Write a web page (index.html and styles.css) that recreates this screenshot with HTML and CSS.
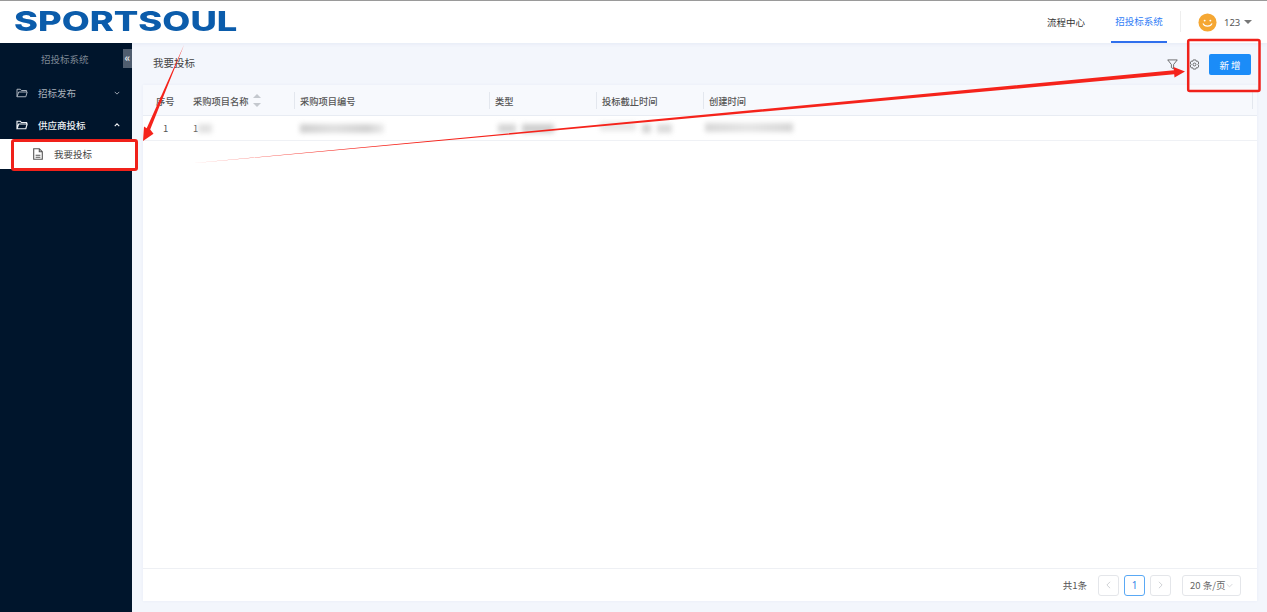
FILE: index.html
```
<!DOCTYPE html>
<html lang="zh">
<head>
<meta charset="utf-8">
<title>招投标系统</title>
<link rel="stylesheet" href="styles.css">
</head>
<body>
<div class="app">
  <header class="topbar">
    <div class="logo"><span class="logo-text">SPORTSOUL</span></div>
    <nav class="topnav">
      <a class="topnav-item">流程中心</a>
      <a class="topnav-item active">招投标系统</a>
    </nav>
    <div class="user">
      <svg class="avatar" viewBox="0 0 20 20"><circle cx="10" cy="10" r="9.5" fill="#f5a733"/><circle cx="7" cy="8" r="1" fill="#fff"/><circle cx="13" cy="8" r="1" fill="#fff"/><path d="M5.500 11.500c1 3 8 3 9 0" fill="none" stroke="#fff" stroke-width="1.3" stroke-linecap="round"/></svg>
      <span class="user-name">123</span>
      <span class="caret"></span>
    </div>
  </header>
  <div class="main">
    <aside class="sidebar">
      <div class="side-title">招投标系统</div>
      <div class="side-collapse">«</div>
      <div class="side-group">
        <svg class="folder" viewBox="0 0 14 12"><path d="M1 10.500V1.500h4l1.200 1.500H12.500v1.800M1 10.500h10.600l1.600-5.700H3L1 10.500z" fill="none" stroke="currentColor" stroke-width="1.200"/></svg>
        <span class="side-label">招标发布</span>
        <svg class="chev" viewBox="0 0 8 5"><path d="M1 1l3 3 3-3" fill="none" stroke="currentColor" stroke-width="1.200"/></svg>
      </div>
      <div class="side-group open">
        <svg class="folder" viewBox="0 0 14 12"><path d="M1 10.500V1.500h4l1.200 1.500H12.500v1.800M1 10.500h10.600l1.600-5.700H3L1 10.500z" fill="none" stroke="currentColor" stroke-width="1.400"/></svg>
        <span class="side-label">供应商投标</span>
        <svg class="chev" viewBox="0 0 8 5"><path d="M1 4l3-3 3 3" fill="none" stroke="currentColor" stroke-width="1.500"/></svg>
      </div>
      <div class="side-item">
        <svg class="doc" viewBox="0 0 10 12"><path d="M.7.7h5.600l3 3v7.600H.7zM6.300.7v3h3" fill="none" stroke="#555" stroke-width="1.100"/><path d="M2.600 7.200h4.800M2.600 9.200h4.800" stroke="#555" stroke-width="1.100"/></svg>
        <span>我要投标</span>
      </div>
    </aside>
    <main class="content">
      <div class="toolbar">
        <h1 class="page-title">我要投标</h1>
        <div class="tools">
          <svg class="tool-icon filter" viewBox="0 0 12 12"><path d="M.8 1h10.400L7.200 6v4.800L4.800 9.400V6z" fill="none" stroke="#555" stroke-width=".9"/></svg>
          <svg class="tool-icon gear" viewBox="0 0 12 12"><path d="M4.600 1h2.800l.5 1.500 1.500-.3 1.300 2.200-1 1.600 1 1.600-1.300 2.200-1.500-.3-.5 1.500H4.600l-.5-1.500-1.500.3L1.300 7.600l1-1.600-1-1.600 1.300-2.200 1.500.3z" fill="none" stroke="#555" stroke-width=".9"/><circle cx="6" cy="6" r="1.600" fill="none" stroke="#555" stroke-width=".9"/></svg>
          <button class="btn-primary">新 增</button>
        </div>
      </div>
      <section class="card">
        <div class="table">
          <div class="row head">
            <div class="cell c-idx">序号</div>
            <div class="cell c-name">采购项目名称
              <span class="sort"><i class="up"></i><i class="down"></i></span>
            </div>
            <div class="cell c-code">采购项目编号</div>
            <div class="cell c-type">类型</div>
            <div class="cell c-end">投标截止时间</div>
            <div class="cell c-created">创建时间</div>
          </div>
          <div class="row body">
            <div class="cell c-idx center">1</div>
            <div class="cell c-name">1<span class="blur b-name"></span></div>
            <div class="cell c-code"><span class="blur b-code"></span></div>
            <div class="cell c-type"><span class="blur b-type1"></span><span class="blur b-type2"></span></div>
            <div class="cell c-end"><span class="blur b-end1"></span><span class="blur b-end2"></span><span class="blur b-end3"></span></div>
            <div class="cell c-created"><span class="blur b-created"></span></div>
          </div>
        </div>
        <footer class="pager">
          <span class="total">共1条</span>
          <span class="page-btn disabled"><svg viewBox="0 0 6 10"><path d="M5 1L1 5l4 4" fill="none" stroke="currentColor"/></svg></span>
          <span class="page-btn current">1</span>
          <span class="page-btn disabled last"><svg viewBox="0 0 6 10"><path d="M1 1l4 4-4 4" fill="none" stroke="currentColor"/></svg></span>
          <span class="page-size">20 条/页<svg viewBox="0 0 10 6"><path d="M1 1l4 4 4-4" fill="none" stroke="currentColor"/></svg></span>
        </footer>
      </section>
    </main>
  </div>
  <svg class="annotations" viewBox="0 0 1267 612">
    <rect x="12.500" y="140.500" width="124" height="29" rx="1.500" fill="none" stroke="#f0211a" stroke-width="3"/>
    <rect x="1188.200" y="40" width="71.300" height="51" rx="1.500" fill="none" stroke="#f0211a" stroke-width="2.500"/>
    <path d="M184 45L150.200 129.500l3.300 4.200L143 141l1-14.500 2.700 1.800z" fill="#f5231b"/>
    <path d="M190 163.500L1174 70.200l-.5-3.200L1185 71.600l-10.500 5.800-.3-3.100z" fill="#f5231b"/>
  </svg>
</div>
</body>
</html>
```
FILE: styles.css
```
* { box-sizing: border-box; }
html, body { margin: 0; height: 100%; }
body {
  font-family: "Noto Sans CJK SC", "Noto Sans", sans-serif;
  font-size: 9.5px;
  color: #444;
  background: #f3f6fc;
  overflow: hidden;
}
.app { position: relative; width: 1267px; height: 612px; display: flex; flex-direction: column; }
.topbar {
  height: 43px;
  flex: none;
  display: flex;
  align-items: stretch;
  background: #fff;
  border-top: 1px solid #9a9a9a;
  box-shadow: 0 1px 4px rgba(60, 90, 160, .08);
  position: relative;
}
.logo { width: 1030px; padding: 10px 0 0 14px; flex: none; overflow: hidden; }
.logo-text {
  display: block;
  width: 222px;
  line-height: 22px;
  font-family: Inter, "Liberation Sans", sans-serif;
  font-weight: 800;
  font-size: 27px;
  color: #0b5cab;
  transform-origin: 0 50%;
  transform: scaleX(1.345);
  white-space: nowrap;
}
.topnav { display: flex; width: 150px; flex: none; }
.topnav-item { display: flex; align-items: center; justify-content: center; height: 42px; }
.topnav-item:first-child { width: 72px; color: #333; margin-right: 9px; }
.topnav-item.active { width: 56px; color: #2f7df6; border-bottom: 2px solid #2f6fed; }
.user {
  display: flex;
  align-items: center;
  padding-left: 18px;
  position: relative;
}
.user::before { content: ""; position: absolute; left: 0; top: 10px; height: 21px; width: 1px; background: #eee; }
.avatar { width: 19px; height: 19px; flex: none; }
.user-name { margin-left: 7px; color: #555; font-size: 9.5px; font-family: "Noto Sans", sans-serif; }
.caret { margin-left: 4px; border: 4px solid transparent; border-top: 4.5px solid #777; border-bottom: 0; }
.main { flex: 1; display: flex; min-height: 0; }
.sidebar { width: 132px; flex: none; background: #00152c; color: #a9b1bb; position: relative; }
.side-title { height: 34px; padding: 0 0 2px 41px; display: flex; align-items: center; color: #7d8794; }
.side-collapse {
  position: absolute;
  right: 0;
  top: 6px;
  width: 9px;
  height: 19px;
  background: #4f5d6f;
  color: #e4e7eb;
  font-size: 11px;
  font-weight: 700;
  line-height: 17px;
  text-align: center;
}
.side-group { height: 32px; display: flex; align-items: center; padding-left: 16px; }
.side-group.open { color: #eef1f4; font-weight: 500; }
.folder { width: 12px; height: 10px; flex: none; }
.side-label { margin-left: 10px; flex: 1; }
.chev { width: 6px; height: 4px; margin-right: 12px; flex: none; }
.side-item {
  margin-top: -2px;
  height: 30px;
  background: #fff;
  display: flex;
  align-items: center;
  padding-left: 33px;
  color: #444;
  width: 136px;
  position: relative;
}
.doc { width: 10px; height: 12px; flex: none; margin-right: 11px; }
.content { flex: 1; min-width: 0; display: flex; flex-direction: column; padding: 0 10px 11px 11px; }
.toolbar { height: 42px; flex: none; display: flex; align-items: center; justify-content: space-between; padding: 0 6px 0 10px; }
.page-title { margin: 0 0 3px; font-size: 10.5px; font-weight: 400; color: #444; }
.tools { display: flex; align-items: center; margin-top: 1px; }
.tool-icon { width: 11px; height: 11px; }
.filter { margin-right: 11px; }
.gear { margin-right: 9px; }
.btn-primary {
  width: 42px;
  height: 21px;
  border: 0;
  border-radius: 2px;
  background: #1b8cf8;
  color: #fff;
  font: inherit;
  padding: 0;
}
.card { flex: 1; min-height: 0; background: #fff; display: flex; flex-direction: column; box-shadow: 0 0 3px rgba(60, 90, 160, .06); }
.table { flex: 1; min-height: 0; }
.row { display: flex; }
.head { height: 31px; padding-top: 2px; background: #f7f9fd; border-bottom: 1px solid #e8ecf3; font-weight: 500; font-size: 9.25px; color: #555; position: relative; }
.head::after { content: ""; position: absolute; right: 4px; top: 7px; height: 17px; width: 1px; background: #e3e7ee; }
.body { height: 25px; border-bottom: 1px solid #eff1f5; color: #555; }
.cell { display: flex; align-items: center; padding-left: 5px; position: relative; flex: none; }
.head .cell + .cell:not(.c-name)::before {
  content: "";
  position: absolute;
  left: -1px;
  top: 5px;
  height: 17px;
  width: 1px;
  background: #e3e7ee;
}
.c-idx { width: 45px; padding-left: 13px; }
.c-idx.center { padding-left: 20px; }
.c-name { width: 107px; padding-left: 5px; }
.c-code { width: 195px; }
.c-type { width: 107px; }
.c-end { width: 107px; }
.c-created { flex: 1; }
.sort { display: inline-flex; flex-direction: column; gap: 5px; margin-left: 4px; margin-top: -1px; }
.sort i { display: block; border: 4px solid transparent; border-top: 0; border-bottom: 4px solid #c4c8ce; }
.sort i.down { border-bottom: 0; border-top: 4px solid #c4c8ce; }
.blur { display: inline-block; height: 9px; background: #d6d6d6; filter: blur(2.5px); }
.b-name { width: 14px; background: #e2e2e2; }
.b-code { width: 84px; background: linear-gradient(90deg, #cfcfcf, #e0e0e0 40%, #d2d2d2 80%, #ececec); }
.b-type1 { width: 18px; margin-left: 3px; }
.b-type2 { width: 32px; margin-left: 6px; background: #cfcfcf; }
.b-end1 { width: 36px; background: #e8e8e8; margin-left: -2px; margin-top: -3px; }
.b-end2 { width: 9px; margin-left: 6px; }
.b-end3 { width: 15px; margin-left: 6px; background: #dcdcdc; }
.b-created { width: 88px; background: linear-gradient(90deg, #d8d8d8, #e6e6e6 50%, #d6d6d6); margin-left: -4px; margin-top: -1px; }
.pager {
  height: 33px;
  flex: none;
  border-top: 1px solid #eef0f4;
  display: flex;
  align-items: center;
  justify-content: flex-end;
  padding-right: 16px;
  color: #555;
}
.total { margin-right: 11px; }
.page-btn {
  width: 21px;
  height: 21px;
  border: 1px solid #e4e6ea;
  border-radius: 3px;
  display: flex;
  align-items: center;
  justify-content: center;
  margin-right: 5px;
  background: #fff;
}
.page-btn svg { width: 5px; height: 8px; }
.page-btn.disabled { color: #c4c7cc; }
.page-btn.current { border-color: #5aa9f5; color: #2f86e8; font-size: 10px; font-family: "Noto Sans", sans-serif; }
.page-btn.last { margin-right: 0; }
.page-size {
  margin-left: 11px;
  width: 59px;
  height: 21px;
  border: 1px solid #e4e6ea;
  border-radius: 3px;
  display: flex;
  align-items: center;
  padding-left: 7px;
  color: #666;
  white-space: nowrap;
}
.page-size svg { width: 7px; height: 5px; margin-left: 1px; color: #c4c7cc; flex: none; }
.annotations { position: absolute; inset: 0; width: 1267px; height: 612px; pointer-events: none; }
```
